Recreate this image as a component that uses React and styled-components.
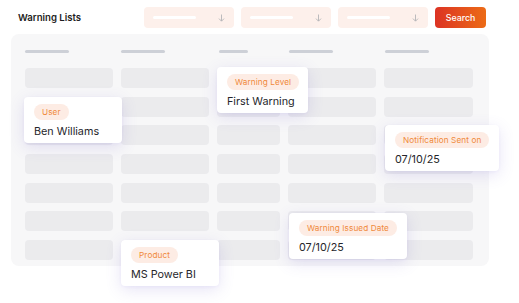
import React from "react";
import styled, { createGlobalStyle } from "styled-components";

const Global = createGlobalStyle`
  html, body { margin: 0; padding: 0; background: #ffffff; }
  body { font-family: "Inter", "Liberation Sans", sans-serif; }
`;

const Page = styled.div`
  position: relative;
  width: 519px;
  height: 303px;
  overflow: hidden;
  background: #fff;
`;

const TopBar = styled.div`
  display: flex;
  align-items: center;
  gap: 7px;
  padding: 7px 33px 0 18px;
  height: 21px;
`;

const Title = styled.div`
  flex: 1;
  font-size: 9.6px;
  font-weight: 600;
  color: #1d1d22;
`;

const Dropdown = styled.div`
  width: 90px;
  height: 21px;
  box-sizing: border-box;
  border-radius: 4px;
  background: #fdf0eb;
  display: flex;
  align-items: center;
  justify-content: space-between;
  padding: 0 9px 0 9px;
`;

const DropLine = styled.div`
  width: 43px;
  height: 3px;
  border-radius: 2px;
  background: #ffffff;
`;

const SearchButton = styled.button`
  width: 51px;
  height: 21px;
  border: none;
  border-radius: 4px;
  background: linear-gradient(90deg, #dc3324 0%, #ec6b16 100%);
  color: #fff;
  font-family: "Inter", "Liberation Sans", sans-serif;
  font-size: 8.8px;
  font-weight: 500;
  padding: 0;
`;

const Panel = styled.div`
  margin: 6px 30px 0 11px;
  background: #f7f7f8;
  border-radius: 8px;
  padding: 16px 16px 6px 14px;
  height: 232px;
  box-sizing: border-box;
`;

const Grid = styled.div`
  display: grid;
  grid-template-columns: 88px 88px 63px 88px 89px;
  column-gap: 8px;
  row-gap: 8.66px;
  grid-auto-rows: 20px;
`;

const HeadRow = styled.div`
  display: grid;
  grid-template-columns: 88px 88px 63px 88px 89px;
  column-gap: 8px;
  margin-bottom: 15px;
`;

const HeadBar = styled.div`
  width: ${(p) => p.$w}px;
  margin-left: ${(p) => p.$ml || 0}px;
  height: 3px;
  border-radius: 2px;
  background: #cdd0d7;
`;

const Cell = styled.div`
  background: #ebebed;
  border-radius: 4px;
`;

const Card = styled.div`
  position: absolute;
  left: ${(p) => p.$x}px;
  top: ${(p) => p.$y}px;
  width: ${(p) => p.$w}px;
  height: 46px;
  box-sizing: border-box;
  background: #fff;
  border-radius: 4px;
  box-shadow: 0 4px 16px rgba(104, 84, 200, 0.16), 0 1px 3px rgba(104, 84, 200, 0.06);
  padding: 7px 10px 0 10px;
  display: flex;
  flex-direction: column;
  align-items: flex-start;
  gap: 5px;
`;

const Pill = styled.span`
  display: inline-flex;
  align-items: center;
  height: 16px;
  padding: 0 8px;
  border-radius: 8px;
  background: #fdece4;
  color: #f0893a;
  font-size: 8.2px;
  font-weight: 400;
  letter-spacing: 0.1px;
  white-space: nowrap;
`;

const Value = styled.div`
  font-size: 10.8px;
  color: #26262b;
  white-space: nowrap;
`;

const ArrowIcon = () => (
  <svg width="7" height="8" viewBox="0 0 7 8" fill="none">
    <path d="M3.5 0.5V7M1 4.6L3.5 7.2L6 4.6" stroke="#b4b4b8" strokeWidth="0.9" />
  </svg>
);

const heads = [
  { w: 44 },
  { w: 44 },
  { w: 29, ml: 2 },
  { w: 44, ml: 1 },
  { w: 44, ml: 1 },
];

const cards = [
  { x: 24, y: 97, w: 98, label: "User", value: "Ben Williams" },
  { x: 217, y: 67, w: 91, label: "Warning Level", value: "First Warning" },
  { x: 385, y: 125, w: 114, label: "Notification Sent on", value: "07/10/25" },
  { x: 289, y: 213, w: 118, label: "Warning Issued Date", value: "07/10/25" },
  { x: 121, y: 240, w: 98, label: "Product", value: "MS Power BI" },
];

export default function App() {
  return (
    <Page>
      <Global />
      <TopBar>
        <Title>Warning Lists</Title>
        {[0, 1, 2].map((i) => (
          <Dropdown key={i}>
            <DropLine />
            <ArrowIcon />
          </Dropdown>
        ))}
        <SearchButton>Search</SearchButton>
      </TopBar>
      <Panel>
        <HeadRow>
          {heads.map((h, i) => (
            <HeadBar key={i} $w={h.w} $ml={h.ml} />
          ))}
        </HeadRow>
        <Grid>
          {Array.from({ length: 35 }).map((_, i) => (
            <Cell key={i} />
          ))}
        </Grid>
      </Panel>
      {cards.map((c) => (
        <Card key={c.label} $x={c.x} $y={c.y} $w={c.w}>
          <Pill>{c.label}</Pill>
          <Value>{c.value}</Value>
        </Card>
      ))}
    </Page>
  );
}
